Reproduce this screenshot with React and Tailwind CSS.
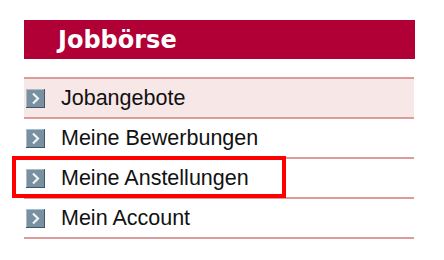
const ITEMS = ['Jobangebote', 'Meine Bewerbungen', 'Meine Anstellungen', 'Mein Account']

function ArrowIcon() {
  return (
    <svg width="19" height="19" viewBox="0 0 19 19" className="shrink-0">
      <rect x="0" y="0" width="19" height="19" fill="#3f5766" />
      <rect x="0" y="0" width="18" height="18" fill="#a9bcc7" />
      <rect x="1" y="1" width="17" height="17" fill="#7890a0" />
      <path d="M7 4.5 L12 9.5 L7 14.5" fill="none" stroke="#eef3f6" strokeWidth="2.2" />
    </svg>
  )
}

export default function App() {
  return (
    <div className="relative w-[444px] h-[260px] bg-white font-['Liberation_Sans',Arial,sans-serif]">
      <div className="ml-[24px] pt-[20px] w-[391px]">
        <div className="h-[39px] bg-[#b10036] flex items-center pl-[34px] text-white font-bold text-[24px] font-['DejaVu_Sans',Verdana,sans-serif]">
          Jobbörse
        </div>
        <ul className="mt-[18px] border-t-2 border-[#dc9c9c] w-[390px]">
          {ITEMS.map((item, i) => (
            <li
              key={item}
              className={`h-[40px] border-b-2 border-[#dc9c9c] flex items-center pl-[2px] ${i === 0 ? 'bg-[#f7e7e6]' : ''}`}
            >
              <ArrowIcon />
              <span className="ml-[16px] text-[21.5px] text-[#111]">{item}</span>
            </li>
          ))}
        </ul>
      </div>
      {/* annotation box */}
      <div className="absolute left-[12px] top-[156px] w-[274px] h-[42px] border-[4px] border-[#ff0000]" />
    </div>
  )
}
